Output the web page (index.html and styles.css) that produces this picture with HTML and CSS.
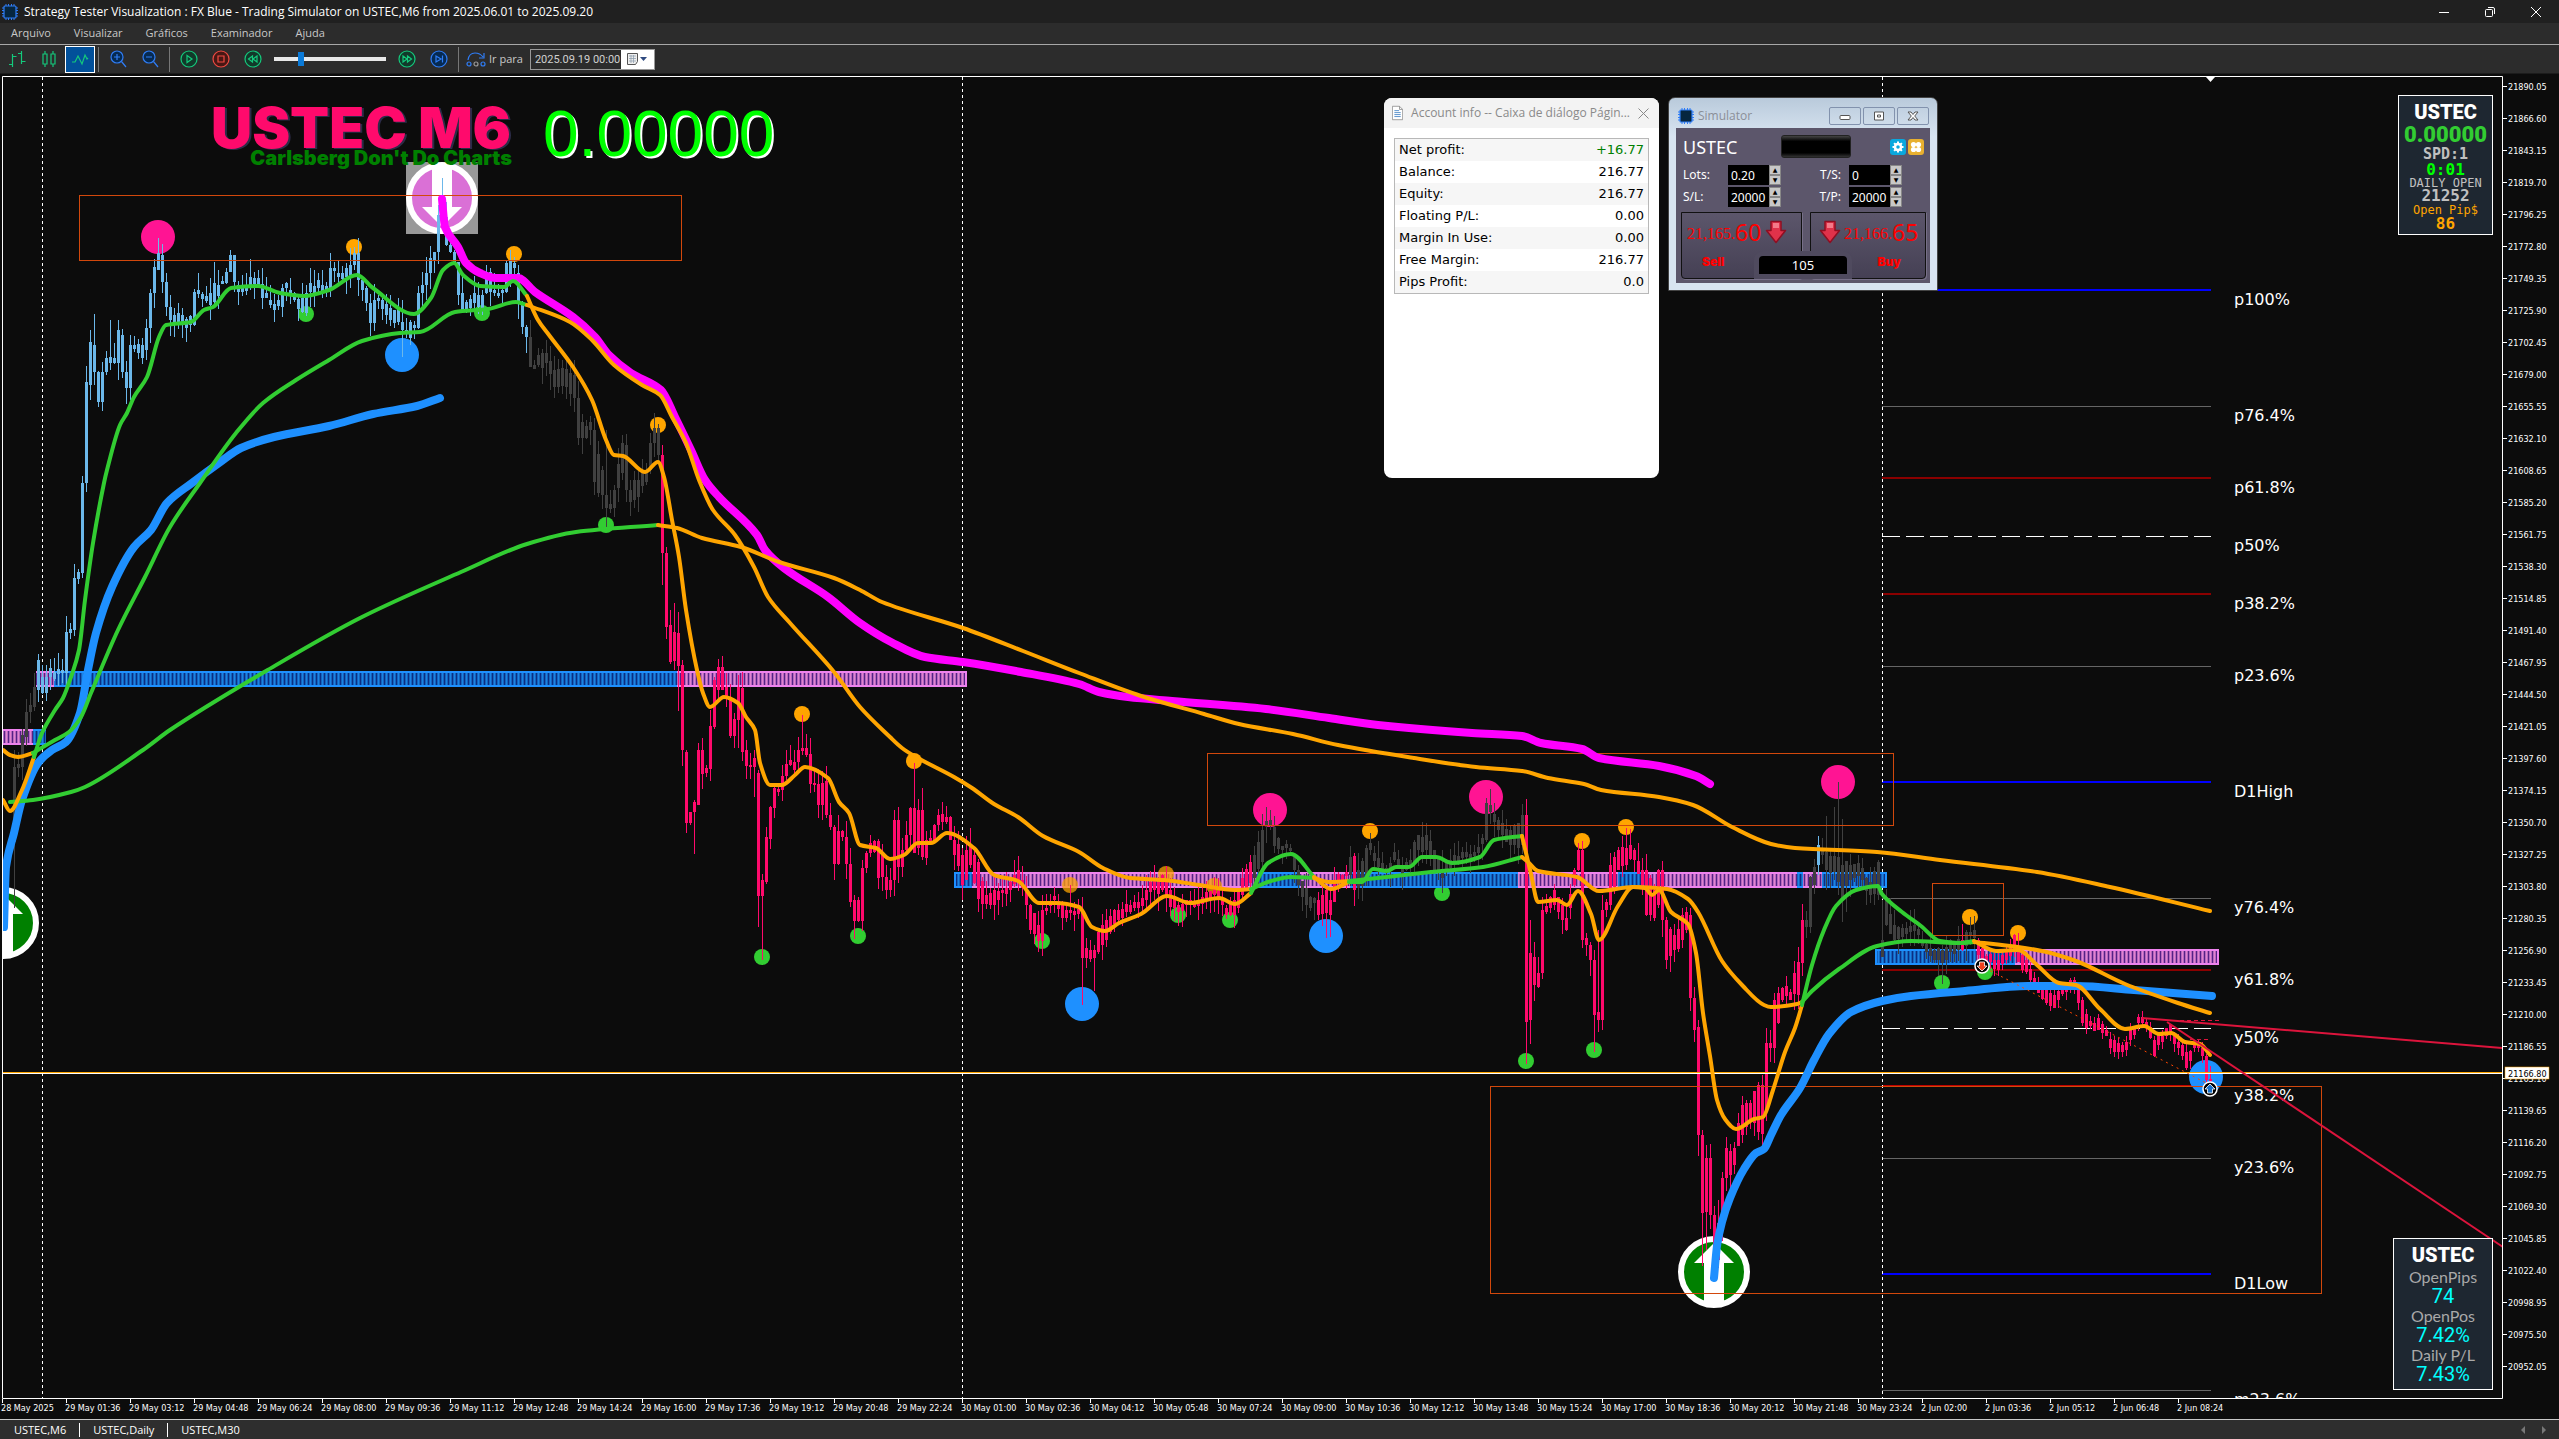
FILE: index.html
```html
<!DOCTYPE html>
<html lang="pt">
<head>
<meta charset="utf-8">
<title>Strategy Tester Visualization</title>
<link rel="stylesheet" href="styles.css">
</head>
<body>
<svg class="defs" aria-hidden="true">
  <symbol id="chip" viewBox="0 0 16 16"><path d="M4 0v16M6.500 0v16M9.500 0v16M12 0v16M0 4h16M0 6.500h16M0 9.500h16M0 12h16" stroke="#2f7df6" stroke-width="1"/><rect x="2" y="2" width="12" height="12" rx="1" fill="#06263f" stroke="#2f7df6" stroke-width="1.200"/></symbol>
  <symbol id="drop" viewBox="0 0 22 24"><path d="M6 1.500h10v9h4.500L11 22.500 1.500 10.500H6z" fill="#e0324a" stroke="#8e0f22" stroke-width="1.500" stroke-linejoin="round"/><path d="M8 3h6v5H8z" fill="#f47a88"/></symbol>
</svg>
<header class="titlebar">
  <svg class="i16"><use href="#chip"/></svg>
  <span class="title">Strategy Tester Visualization : FX Blue - Trading Simulator on USTEC,M6 from 2025.06.01 to 2025.09.20</span>
  <div class="winctl">
    <button aria-label="Minimize"><svg viewBox="0 0 12 12"><path d="M1 6.500h10"/></svg></button>
    <button aria-label="Restore"><svg viewBox="0 0 12 12"><rect x="1.500" y="3.500" width="7" height="7" rx="1"/><path d="M4 1.500h5q1.500 0 1.500 1.500v5"/></svg></button>
    <button aria-label="Close"><svg viewBox="0 0 12 12"><path d="M1 1l10 10M11 1L1 11"/></svg></button>
  </div>
</header>
<nav class="menubar">
  <a href="#">Arquivo</a><a href="#">Visualizar</a><a href="#">Gráficos</a><a href="#">Examinador</a><a href="#">Ajuda</a>
</nav>
<div class="toolbar">
  <button class="tb" aria-label="Bars"><svg class="i18 g" viewBox="0 0 18 18"><path d="M4.500 4v13M4.500 6.500h4M1 14.500h3.500M13.500 1v13M13.500 11.500h4M10 3.500h3.500"/></svg></button>
  <button class="tb" aria-label="Candles"><svg class="i18 g" viewBox="0 0 18 18"><path d="M5 1v3M5 14v3M13 1v3M13 14v3M3 4h4v10H3zM11 4h4v10h-4z"/></svg></button>
  <button class="tb on" aria-label="Line"><svg class="i18 g" viewBox="0 0 18 18"><path d="M1 12h3l3-6 4 8 3-9 2 4 1-1"/></svg></button>
  <i class="sep"></i>
  <button class="tb" aria-label="Zoom in"><svg class="i18 b" viewBox="0 0 18 18"><circle cx="8" cy="7" r="6" fill="#062a52"/><path d="M12.500 11.500L17 17M5 7h6M8 4v6"/></svg></button>
  <button class="tb" aria-label="Zoom out"><svg class="i18 b" viewBox="0 0 18 18"><circle cx="8" cy="7" r="6" fill="#062a52"/><path d="M12.500 11.500L17 17M5 7h6"/></svg></button>
  <i class="sep"></i>
  <button class="tb" aria-label="Play"><svg class="i18 g" viewBox="0 0 18 18"><circle cx="9" cy="9" r="8" fill="#12392a"/><path d="M7 5.500l5 3.500-5 3.500z"/></svg></button>
  <button class="tb" aria-label="Stop"><svg class="i18 r" viewBox="0 0 18 18"><circle cx="9" cy="9" r="8" fill="#471714"/><path d="M6 6h6v6H6z"/></svg></button>
  <button class="tb" aria-label="Slower"><svg class="i18 g" viewBox="0 0 18 18"><circle cx="9" cy="9" r="8" fill="#12392a"/><path d="M8.500 6v6L4.500 9zM13 6v6L9 9z"/></svg></button>
  <input class="speed" type="range" min="0" max="100" value="23" aria-label="Speed">
  <button class="tb" aria-label="Faster"><svg class="i18 g" viewBox="0 0 18 18"><circle cx="9" cy="9" r="8" fill="#12392a"/><path d="M5 6v6l4-3zM9.500 6v6l4-3z"/></svg></button>
  <button class="tb" aria-label="To end"><svg class="i18 b" viewBox="0 0 18 18"><circle cx="9" cy="9" r="8" fill="#062a52"/><path d="M6 6v6l5-3zM12.500 5.500v7"/></svg></button>
  <i class="sep"></i>
  <label class="goto" for="date"><svg class="i20 b" viewBox="0 0 20 18"><path d="M2 10Q3 3 9 3q5 0 8 4M18 3v5h-5"/><circle cx="3" cy="14" r="2"/><circle cx="10" cy="14" r="2" stroke="#999"/><circle cx="17" cy="14" r="2"/></svg>Ir para</label>
  <div class="date"><input id="date" type="text" value="2025.09.19 00:00"><button aria-label="Calendar"><svg width="22" height="14" viewBox="0 0 22 14"><path d="M1.500 1.500h10v8l-2 3h-8z" fill="#eee" stroke="#555"/><path d="M3 4h7M3 6.500h7M3 9h7M5 3v8M7.500 3v8" stroke="#8899aa" stroke-width=".7"/><path d="M14 5h7l-3.500 4z" fill="#2f4a80"/></svg></button></div>
</div>
<main class="workspace">
  <svg id="chart" class="chart" viewBox="0 74 2559 1345" preserveAspectRatio="xMinYMin meet">
    <defs>
      <pattern id="pb" width="4" height="14" patternUnits="userSpaceOnUse"><rect width="4" height="14" fill="#1565bb"/><rect width="1" height="14" fill="#0a2d86"/><rect x="2" width="1" height="14" fill="#1c83e6"/></pattern>
      <pattern id="pv" width="4" height="14" patternUnits="userSpaceOnUse"><rect width="4" height="14" fill="#b467bd"/><rect width="1" height="14" fill="#552186"/><rect x="2" width="1" height="14" fill="#e283d0"/></pattern>
      <clipPath id="area"><rect x="3" y="77" width="2499" height="1321"/></clipPath>
    </defs>
    <g id="plot" clip-path="url(#area)"></g>
    <path class="frame" d="M2.500 1398.500V76.500H2502.500V1398.500H2.500"/>
    <path d="M2206 77h9l-4.500 5z" fill="#fff"/>
    <g id="axes"></g>
  </svg>

  <section class="account">
    <header><svg width="14" height="18" viewBox="0 0 14 18"><path d="M.5.5h9l4 4v13H.5z" fill="#fff" stroke="#888"/><path d="M9.500.5v4h4" fill="none" stroke="#888"/><path d="M3 6h6M3 8.500h8M3 11h8M3 13.500h8" stroke="#3478c0"/></svg><span>Account info -- Caixa de diálogo Págin...</span><button aria-label="Close"><svg width="11" height="11" viewBox="0 0 11 11"><path d="M.5.5l10 10M10.500.5l-10 10" stroke="#888"/></svg></button></header>
    <table>
      <tr><th>Net profit:</th><td class="pos">+16.77</td></tr>
      <tr><th>Balance:</th><td>216.77</td></tr>
      <tr><th>Equity:</th><td>216.77</td></tr>
      <tr><th>Floating P/L:</th><td>0.00</td></tr>
      <tr><th>Margin In Use:</th><td>0.00</td></tr>
      <tr><th>Free Margin:</th><td>216.77</td></tr>
      <tr><th>Pips Profit:</th><td>0.0</td></tr>
    </table>
  </section>

  <section class="sim">
    <header><svg class="i16"><use href="#chip"/></svg><span>Simulator</span>
      <button aria-label="Minimize"><svg viewBox="0 0 14 12"><rect x="2" y="5.500" width="10" height="4" rx="1"/></svg></button>
      <button aria-label="Maximize"><svg viewBox="0 0 14 12"><path d="M2.500 2h9v8h-9zM5.500 5h3v2h-3z"/></svg></button>
      <button aria-label="Close"><svg viewBox="0 0 14 12"><path d="M2 2h3l2 2.500L9 2h3L8.700 6 12 10H9L7 7.500 5 10H2L5.300 6z"/></svg></button>
    </header>
    <div class="simbody">
      <div class="simtop"><b>USTEC</b><i class="lcd"></i>
        <button class="gear" aria-label="Settings"><svg viewBox="0 0 16 16"><circle cx="8" cy="8" r="3" fill="none" stroke="#fff" stroke-width="2.500"/><path d="M8 2.500v2M8 11.500v2M2.500 8h2M11.500 8h2M4.100 4.100l1.400 1.400M10.500 10.500l1.400 1.400M4.100 11.900l1.400-1.400M10.500 5.500l1.400-1.400" stroke="#fff" stroke-width="2"/></svg></button>
        <button class="apps" aria-label="Tools"><svg viewBox="0 0 16 16"><g fill="#fff"><circle cx="5.500" cy="5.500" r="2.600"/><circle cx="10.500" cy="5.500" r="2.600"/><circle cx="5.500" cy="10.500" r="2.600"/><circle cx="10.500" cy="10.500" r="2.600"/></g></svg></button></div>
      <div class="fields">
        <label for="lots">Lots:</label><div class="num"><input id="lots" value="0.20"><span><button aria-label="Up">▲</button><button aria-label="Down">▼</button></span></div>
        <label class="r" for="ts">T/S:</label><div class="num"><input id="ts" value="0"><span><button aria-label="Up">▲</button><button aria-label="Down">▼</button></span></div>
        <label for="sl">S/L:</label><div class="num"><input id="sl" value="20000"><span><button aria-label="Up">▲</button><button aria-label="Down">▼</button></span></div>
        <label class="r" for="tp">T/P:</label><div class="num"><input id="tp" value="20000"><span><button aria-label="Up">▲</button><button aria-label="Down">▼</button></span></div>
      </div>
      <div class="deal">
        <button><span class="px"><small>21,165.</small>60<svg width="22" height="24"><use href="#drop"/></svg></span><strong>Sell</strong></button>
        <button class="buy"><span class="px"><svg width="22" height="24"><use href="#drop"/></svg><small>21,166.</small>65</span><strong>Buy</strong></button>
        <output>105</output>
      </div>
    </div>
  </section>

  <aside class="card quote">
    <h2>USTEC</h2><p class="q1">0.00000</p><p class="q2">SPD:1</p><p class="q3">0:01</p><p class="q4">DAILY OPEN</p><p class="q5">21252</p><p class="q6">Open Pip$</p><p class="q7">86</p>
  </aside>
  <aside class="card perf">
    <h2>USTEC</h2><p>OpenPips</p><p class="v">74</p><p>OpenPos</p><p class="v">7.42%</p><p>Daily P/L</p><p class="v">7.43%</p>
  </aside>
</main>
<footer class="tabs"><a href="#">USTEC,M6</a><a href="#">USTEC,Daily</a><a href="#">USTEC,M30</a><span class="arrows"><svg width="30" height="8" viewBox="0 0 30 8"><path d="M6 0v8L2 4zM23 0v8l4-4z" fill="#777"/></svg></span></footer>
<script src="chart.js"></script>
</body>
</html>
```

FILE: styles.css
```css
* { box-sizing: border-box; }
body { margin: 0; min-height: 100vh; display: flex; flex-direction: column; background: #0c0c0c; color: #ddd; font: 12px/16px "Open Sans", "Noto Sans", sans-serif; }
button { margin: 0; padding: 0; border: 0; background: none; color: inherit; font: inherit; }
a { color: inherit; text-decoration: none; }
svg { display: block; }
.defs { position: absolute; width: 0; height: 0; }
.i16 { width: 16px; height: 16px; }
.i18 { width: 18px; height: 18px; fill: none; stroke-width: 1.200; }
.i20 { width: 20px; height: 18px; fill: none; stroke-width: 1.200; }
.g { stroke: #14c97c; } .b { stroke: #2f7df6; } .r { stroke: #f04a42; }

.titlebar { display: flex; align-items: center; gap: 6px; height: 23px; padding-left: 2px; background: #202020; color: #fff; }
.title { flex: 1; }
.winctl { display: flex; }
.winctl button { width: 46px; display: grid; place-items: center; }
.winctl svg { width: 12px; height: 12px; fill: none; stroke: #fff; }
.menubar { display: flex; gap: 23px; align-items: center; height: 22px; padding: 0 0 2px 11px; background: #2c2c2c; border-bottom: 1px solid #a8a8a8; color: #c8c8c8; font-size: 11px; }
.toolbar { display: flex; align-items: center; height: 29px; background: #2c2c2c; border-bottom: 1px solid #1c1c1c; padding-left: 1px; }
.tb { width: 32px; height: 27px; display: grid; place-items: center; }
.tb.on { width: 30px; background: #02509a; border: 1px solid #fff; }
.sep { width: 1px; height: 25px; margin: 0 3px; background: #777; }
.speed { appearance: none; width: 112px; height: 20px; margin: 0 5px; background: none; }
.speed::-webkit-slider-runnable-track { height: 4px; background: #e8e8e8; }
.speed::-webkit-slider-thumb { appearance: none; width: 6px; height: 14px; margin-top: -5px; background: #0a7ad8; }
.goto { display: flex; align-items: center; gap: 3px; margin: 0 7px 0 4px; color: #c8c8c8; font-size: 11px; }
.date { display: flex; height: 21px; border: 1px solid #999; font: 11px Roboto, sans-serif; }
.date input { width: 90px; padding: 0 0 0 4px; border: 0; background: #2c2c2c; color: #d0d0d0; font: inherit; }
.date button { width: 33px; display: grid; place-items: center; background: #fff; }

.workspace { position: relative; flex: 1; overflow: hidden; }
.chart { width: 100%; height: auto; }
.frame { fill: none; stroke: #fff; }
.axis { fill: #fff; font: 9px "DejaVu Sans Condensed", "DejaVu Sans", sans-serif; }
.lvl { fill: #fff; font: 16px "DejaVu Sans", sans-serif; }
.big { font: 900 57px Inter, sans-serif; fill: #ff0a6c; filter: drop-shadow(2px 1px 0 #2c2c48); }
.sub { font: 900 20px Inter, sans-serif; fill: #008000; }
.pip { font: 64px "Liberation Sans", sans-serif; fill: #0f0; filter: drop-shadow(2px 2px 0 #fff); }

.account { position: absolute; left: 1384px; top: 24px; width: 275px; height: 380px; border-radius: 8px; background: #fff; color: #000; overflow: hidden; }
.account header { display: flex; align-items: center; gap: 8px; height: 30px; padding: 0 10px 0 8px; background: #f3f3f3; color: #8a8a8a; }
.account header span { flex: 1; white-space: nowrap; }
.account table { width: 255px; margin: 10px; border: 1px solid #b8b8b8; border-collapse: collapse; font: 13px/22px "DejaVu Sans", sans-serif; }
.account th { font-weight: 400; text-align: left; padding: 0 4px; }
.account td { text-align: right; padding: 0 4px; }
.account tr:nth-child(odd) { background: #f6f6f6; }
.account .pos { color: #008000; }

.sim { position: absolute; left: 1668px; top: 23px; width: 270px; height: 194px; padding: 0 7px 7px; border: 1px solid #444; border-radius: 7px 7px 0 0; background: linear-gradient(#b9cadb, #d8e4f1 20%); }
.sim header { display: flex; align-items: center; gap: 2px; height: 30px; padding: 6px 1px 0 2px; color: #8b8f98; }
.sim header span { flex: 1; padding-left: 2px; }
.sim header button { width: 32px; height: 18px; display: grid; place-items: center; border: 1px solid #8292ad; border-radius: 2px; }
.sim header button svg { width: 14px; height: 12px; fill: #fff; stroke: #555; }
.simbody { height: 155px; background: #5c566b; color: #fff; padding: 7px 6px 0 7px; }
.simtop { display: flex; align-items: center; height: 23px; gap: 2px; }
.simtop b { width: 96px; font: 18px/22px "Noto Sans", sans-serif; }
.lcd { width: 70px; height: 23px; margin-right: auto; border: 1px solid #222; border-radius: 3px; background: linear-gradient(#444, #000 25%, #000 80%, #333); }
.simtop button { width: 16px; height: 16px; border-radius: 3px; }
.gear { background: #0aa8dd; } .apps { background: #e8b030; }
.fields { display: grid; grid-template-columns: 45px 53px 1fr 53px; row-gap: 2px; margin: 7px 22px 0 0; font: 12px/20px "Noto Sans", sans-serif; }
.fields .r { text-align: right; padding-right: 8px; }
.num { display: flex; height: 20px; background: #000; }
.num input { width: 41px; padding: 0 0 0 3px; border: 0; background: #000; color: #fff; font: 12px "Noto Sans", sans-serif; }
.num span { display: grid; width: 12px; }
.num button { height: 10px; background: #c8c8c8; border: 1px solid #888; color: #000; font: 6px/8px "DejaVu Sans", sans-serif; }
.deal { position: relative; display: flex; gap: 8px; margin: 5px -2px 0; }
.deal > button { flex: 1; height: 67px; border: 1px solid #111; border-radius: 0 0 4px 4px; box-shadow: 1px 1px 0 #777088; background: linear-gradient(#5c566b, #454054); color: #f00; text-align: left; padding: 4px 5px; }
.px { display: flex; align-items: center; height: 30px; font: 23px/30px "Noto Sans", sans-serif; }
.px small { font: 16px/30px "Liberation Serif", serif; padding-top: 4px; }
.px svg { margin-left: 4px; }
.buy .px svg { margin: 0 3px 0 3px; }
.deal strong { display: block; margin: 8px 15px; font: 900 12px/14px Inter, sans-serif; }
.deal .buy { padding-right: 0; }
.deal .buy strong { text-align: right; margin-right: 24px; }
.deal output { position: absolute; left: 73px; bottom: 0; width: 98px; height: 28px; border: 5px solid #4f4a5e; border-radius: 9px 9px 0 0; background: #000; text-align: center; font: 13px/18px "Noto Sans", sans-serif; }

.card { position: absolute; border: 1px solid #fff; background: #1e2731; text-align: center; white-space: nowrap; }
.card h2 { margin: 0; font: 900 20px/24px Roboto, sans-serif; color: #fff; }
.card p { margin: 0; }
.quote { right: 66px; top: 21px; width: 95px; height: 140px; padding-top: 4px; font-family: "DejaVu Sans Mono", monospace; color: #c0c0c0; }
.q1 { font: 900 22px/22px Roboto, sans-serif; color: #32cd32; }
.q2 { font-size: 15px; line-height: 16px; font-weight: 700; }
.q3 { font-size: 16px; line-height: 16px; font-weight: 700; color: #0f0; }
.q4 { font-size: 12px; line-height: 10px; }
.q5 { font-size: 16px; line-height: 16px; font-weight: 700; }
.q6 { font-size: 12px; line-height: 12px; color: #ffa500; }
.q7 { font-size: 16px; line-height: 16px; font-weight: 700; color: #ffa500; }
.perf { right: 66px; bottom: 29px; width: 100px; height: 152px; padding-top: 4px; color: #a9a9a9; font: 16px/20px Lato, sans-serif; }
.perf .v { color: #0ff; font: 20px/19px Roboto, sans-serif; }

.tabs { display: flex; align-items: center; height: 20px; border-top: 1px solid #c8c8c8; background: #2e2e2e; color: #fff; padding-left: 1px; font-size: 11px; line-height: 14px; }
.tabs a { padding: 0 13px; }
.tabs a + a { border-left: 1px solid #fff; }
.arrows { margin-left: auto; padding-right: 10px; }
```

FILE: chart.js
```js
const plot = document.getElementById('plot');
const axes = document.getElementById('axes');
const out = [];

const LIME = '#32cd32', ORANGE = '#ffa500', BLUE = '#1e90ff', VIOLET = '#ee82ee', MAG = '#ff00ff';
const DOWN = '#ff0a6c', FLAT = '#404040', UP = '#6cb8ea', BOX = '#d2480c';

// Smooth curve through the points, with control arms kept inside each step
function poly(pts, color, width) {
  const p = pts.split(' ').map(s => s.split(',').map(Number));
  const slope = p.map((q, i) => {
    const a = p[Math.max(0, i - 1)], b = p[Math.min(p.length - 1, i + 1)];
    const left = (q[1] - a[1]) / (q[0] - a[0] || 1), right = (b[1] - q[1]) / (b[0] - q[0] || 1);
    if (i === 0) return right;
    if (i === p.length - 1) return left;
    return left * right <= 0 ? 0 : 2 * left * right / (left + right);
  });
  let d = `M${p[0]}`;
  for (let i = 1; i < p.length; i++) {
    const a = p[i - 1], b = p[i], h = (b[0] - a[0]) / 3;
    d += `C${a[0] + h} ${a[1] + slope[i - 1] * h} ${b[0] - h} ${b[1] - slope[i] * h} ${b[0]} ${b[1]}`;
  }
  return `<path d="${d}" fill="none" stroke="${color}" stroke-width="${width}" stroke-linejoin="round" stroke-linecap="round"/>`;
}
const line = (x1, y1, x2, y2, color, width = 1, dash = '') =>
  `<line x1="${x1}" y1="${y1}" x2="${x2}" y2="${y2}" stroke="${color}" stroke-width="${width}" stroke-dasharray="${dash}"/>`;

// Big reversal signals
function signal(x, y, fill, up) {
  const d = up ? 1 : -1;
  return `<circle cx="${x}" cy="${y}" r="33" fill="${fill}" stroke="#fff" stroke-width="6"/>` +
    `<path d="M${x} ${y - d * 29}l20 ${d * 20}h-10v${d * 42}h-20v${-d * 42}h-10z" fill="#fff"/>`;
}
out.push('<rect x="406" y="162" width="72" height="72" fill="#999"/>', signal(442, 198, '#da70d6', false), signal(1714, 1272, '#008000', true), signal(3, 923, '#008000', true));

// Pivot levels
[[290, '#00f', 2, 'p100%'], [406.5, '#666', 1, 'p76.4%'], [478, '#8b0000', 2, 'p61.8%'], [536.5, '#fff', 1, 'p50%', '18 6'],
 [594, '#8b0000', 2, 'p38.2%'], [666.5, '#666', 1, 'p23.6%'], [782, '#00f', 2, 'D1High'], [898.5, '#666', 1, 'y76.4%'],
 [970, '#8b0000', 2, 'y61.8%'], [1028.5, '#fff', 1, 'y50%', '18 6'], [1086, '#c00000', 2, 'y38.2%'], [1158.5, '#666', 1, 'y23.6%'],
 [1274, '#00f', 2, 'D1Low'], [1390.5, '#666', 1, 'm23.6%']]
  .forEach(([y, c, w, t, d]) => out.push(line(1882, y, 2211, y, c, w, d || ''), `<text class="lvl" x="2234" y="${Math.floor(y) + 15}">${t}</text>`));

// Day separators
[42.5, 962.5, 1882.5].forEach(x => out.push(line(x, 77, x, 1398, '#fff', 1, '3 3')));

// Swing markers
const dots = (list, r, c) => list.split(' ').forEach(p => {
  const [x, y] = p.split(',');
  out.push(`<circle cx="${x}" cy="${y}" r="${r}" fill="${c}"/>`);
});
dots('158,237 1270,810 1486,797 1838,782', 17, '#ff1493');
dots('402,355 1082,1004 1326,936 2206,1077', 17, BLUE);
dots('354,247 514,254 658,425 802,714 914,761 1370,831 1582,841 1626,827 1970,917 2018,933', 8, ORANGE);
dots('306,314 482,313 606,525 762,957 858,936 1042,941 1178,915 1230,920 1442,893 1526,1061 1594,1050 1942,983 1985,972', 8, LIME);

// Daily open bands: start, end, hue
const band = (y, parts) => parts.forEach(([a, b, hue]) => {
  const v = hue === 'v';
  out.push(`<rect x="${a}" y="${y}" width="${b - a}" height="14" fill="url(#p${hue})"/>`,
    line(a, y, b, y, v ? VIOLET : BLUE, 2), line(a, y + 14, b, y + 14, v ? VIOLET : BLUE, 2));
});
band(730, [[3, 33, 'v'], [33, 46, 'b']]);
band(672, [[36, 54, 'v'], [54, 677, 'b'], [677, 966, 'v']]);
band(873, [[955, 972, 'b'], [972, 1257, 'v'], [1257, 1300, 'b'], [1300, 1350, 'v'], [1350, 1518, 'b'], [1518, 1618, 'v'], [1618, 1643, 'b'], [1643, 1797, 'v'], [1797, 1803, 'b'], [1803, 1822, 'v'], [1822, 1886, 'b']]);
band(950, [[1876, 1976, 'b'], [1976, 1988, 'v'], [1988, 2015, 'b'], [2015, 2218, 'v']]);
[[955, 873, BLUE], [966, 672, VIOLET], [1886, 873, BLUE], [1876, 950, BLUE], [2218, 950, VIOLET]].forEach(([x, y, c]) => out.push(line(x, y - 1, x, y + 15, c, 2)));
dots('1070,885 1166,874 1214,886', 8, '#ffa500bb');

// Candle bodies: x,top,bottom
const bodies = `6,850,867 10,845,850 14,767,842 18,764,768 22,735,767 26,712,737 30,705,712 34,687,707 38,660,690 42,677,693 46,677,693 50,668,677 62,670,673 66,632,673 70,629,633 74,578,630 78,572,579 82,483,573 86,382,483 90,342,385 94,345,372 98,372,402 102,372,402 106,358,372 110,357,363 114,358,363 118,330,363 122,335,372 126,372,388 130,345,388 134,345,349 142,345,358 146,328,350 150,293,328 154,267,293 158,253,270 162,255,282 166,282,307 170,307,320 174,315,325 190,316,325 194,292,325 198,290,294 206,296,301 214,283,302 222,281,284 226,272,283 230,255,272 234,255,282 238,285,292 246,288,291 250,277,287 254,278,284 262,284,298 266,293,298 270,300,305 278,300,306 282,288,307 286,283,288 294,293,300 302,298,312 306,293,313 310,283,292 318,280,288 326,286,290 330,268,288 334,268,271 338,273,277 346,268,277 350,265,277 354,253,265 358,253,280 362,280,290 366,288,303 370,303,323 374,300,323 378,298,301 382,300,309 390,308,320 398,307,322 402,322,330 406,330,333 410,322,338 414,325,328 418,293,328 422,285,293 426,273,285 430,258,273 434,252,260 438,215,252 442,215,219 446,217,245 450,245,252 454,252,263 458,262,295 462,293,310 466,302,310 474,293,303 482,295,308 486,272,293 490,272,292 494,290,293 502,290,293 506,263,292 514,263,268 518,273,302 522,302,327 526,327,337 530,337,367 534,365,369 542,353,368 546,353,363 554,370,387 558,369,387 566,369,387 574,375,398 578,398,438 582,422,438 590,422,430 594,430,482 602,470,495 606,495,508 610,504,509 614,490,508 622,443,473 626,445,490 630,490,502 634,480,500 646,470,482 650,443,470 654,428,443 658,428,455 662,455,553 666,553,627 670,625,662 674,632,661 678,633,666 682,665,750 686,752,823 690,812,823 694,802,812 698,750,805 702,750,774 706,768,773 710,726,769 714,680,727 718,667,690 722,667,690 726,687,697 730,697,736 734,719,736 738,687,720 742,688,752 746,750,766 750,765,767 754,758,767 758,773,896 762,880,896 766,837,882 770,807,839 774,788,808 778,789,792 782,776,790 786,764,776 790,760,765 794,762,770 798,750,762 802,748,751 806,748,755 810,754,784 814,783,785 818,784,805 822,783,805 826,781,815 830,815,827 834,827,864 838,831,864 842,831,837 846,837,864 850,864,902 854,900,921 858,900,921 862,868,921 866,853,868 870,843,853 874,841,852 878,841,878 882,852,877 886,877,890 890,880,890 894,820,880 898,820,867 902,850,867 906,835,850 910,808,835 914,808,853 918,810,848 922,810,857 926,840,858 930,838,843 934,825,840 938,815,825 946,817,822 950,817,840 954,840,855 962,855,885 966,850,880 970,845,865 978,862,899 986,895,904 994,890,905 1002,890,893 1010,882,890 1018,870,880 1022,880,888 1026,890,905 1030,905,930 1038,925,941 1042,910,941 1046,908,911 1054,896,900 1062,905,918 1070,910,913 1078,909,914 1082,910,958 1086,948,958 1094,950,958 1098,932,952 1106,920,940 1118,910,920 1130,905,912 1138,902,908 1146,890,900 1154,880,890 1162,875,890 1170,890,907 1178,905,912 1190,900,905 1202,897,904 1214,888,895 1222,898,905 1226,908,915 1234,900,915 1242,878,895 1254,855,878 1262,830,862 1266,821,826 1270,820,826 1274,827,846 1282,846,850 1290,848,851 1294,855,870 1298,870,885 1306,888,905 1314,898,903 1318,900,915 1326,890,913 1330,900,915 1334,880,902 1338,874,882 1346,872,876 1350,857,875 1354,856,890 1358,870,888 1366,848,880 1370,843,850 1378,858,867 1386,868,873 1394,852,860 1402,866,876 1410,860,866 1414,842,862 1418,835,850 1426,835,850 1434,850,870 1442,872,878 1450,860,868 1462,852,858 1470,854,858 1482,838,844 1486,803,840 1490,805,812 1498,820,830 1510,830,845 1522,815,845 1526,815,1022 1530,953,1020 1534,957,985 1538,973,987 1542,910,973 1546,906,912 1554,890,905 1562,905,920 1566,918,930 1574,870,885 1578,850,870 1582,850,940 1586,938,945 1590,945,960 1594,960,1015 1598,1012,1020 1602,910,1020 1606,902,910 1610,865,905 1618,850,870 1626,848,865 1634,850,860 1642,870,885 1646,870,915 1654,890,918 1658,870,905 1662,870,920 1666,920,960 1674,935,950 1682,915,940 1686,912,930 1690,915,998 1694,998,1030 1698,1027,1135 1702,1135,1213 1706,1158,1212 1710,1158,1215 1714,1215,1260 1718,1223,1260 1722,1178,1225 1726,1148,1178 1734,1148,1165 1742,1105,1135 1750,1103,1120 1758,1085,1132 1762,1085,1134 1766,1043,1110 1770,1043,1048 1774,1000,1048 1782,988,1000 1790,992,1000 1798,962,995 1802,920,963 1806,920,927 1810,877,927 1814,867,885 1818,845,865 1822,849,855 1826,852,870 1834,856,872 1842,865,900 1850,865,880 1862,868,880 1870,882,895 1878,862,895 1882,940,957 1886,900,925 1894,925,940 1906,928,934 1914,925,931 1922,940,946 1934,950,960 1942,950,963 1950,940,952 1962,940,950 1966,932,946 1970,932,936 1974,930,938 1978,940,955 1986,956,963 1998,960,970 2006,952,960 2014,935,950 2022,955,970 2034,978,986 2046,990,1003 2054,995,1008 2062,988,994 2074,980,986 2082,1000,1023 2090,1021,1026 2098,1018,1030 2106,1030,1036 2114,1040,1052 2122,1045,1052 2130,1030,1040 2138,1017,1023 2146,1022,1028 2154,1040,1056 2162,1036,1042 2170,1024,1034 2178,1042,1048 2186,1052,1068 2194,1044,1048 2202,1048,1056 2206,1056,1080 2210,1079,1080`
  .split(/\s+/).map(s => s.split(',').map(Number));
const hues = [[12, DOWN], [36, FLAT], [528, UP], [660, FLAT], [1252, DOWN], [1316, FLAT], [1348, DOWN], [1352, FLAT], [1356, DOWN], [1524, FLAT], [1804, DOWN], [1816, FLAT], [1820, UP], [1960, FLAT], [1964, DOWN], [1976, FLAT], [9999, DOWN]];
// Long wicks: x -> [high, low]
const wicks = { 14: [750, 908], 50: [659, 690], 94: [314, 385], 110: [320, 370], 118: [320, 380], 130: [335, 400], 158: [238, 260], 214: [262, 305], 230: [250, 272], 250: [259, 290], 306: [285, 316], 354: [247, 270], 402: [300, 357], 410: [320, 345], 442: [178, 225], 482: [290, 315], 514: [257, 275], 526: [325, 353], 530: [320, 367], 606: [430, 528], 610: [490, 513], 614: [485, 517], 622: [435, 480], 630: [480, 516], 658: [424, 460], 662: [445, 585], 674: [603, 670], 678: [612, 711], 686: [750, 833], 694: [800, 854], 718: [659, 700], 738: [675, 748], 754: [750, 797], 758: [770, 927], 762: [874, 960], 802: [715, 755], 854: [895, 939], 914: [763, 853], 922: [788, 860], 942: [802, 830], 1070: [885, 920], 1082: [897, 1005], 1094: [945, 991], 1270: [810, 830], 1326: [885, 938], 1330: [890, 937], 1370: [833, 855], 1442: [850, 893], 1486: [798, 842], 1526: [799, 1064], 1530: [920, 1044], 1582: [841, 948], 1594: [950, 1052], 1598: [930, 1032], 1626: [828, 870], 1638: [843, 870], 1698: [1020, 1156], 1702: [1130, 1266], 1706: [1145, 1250], 1718: [1200, 1268], 1758: [1082, 1140], 1826: [816, 890], 1834: [807, 880], 1838: [782, 895], 1842: [819, 922], 1846: [870, 912], 1882: [900, 957], 1942: [945, 984], 1970: [917, 945], 2018: [933, 955], 2206: [1054, 1090], 2210: [1066, 1086] };
let seed = 7;
const rnd = () => (seed = (seed * 16807) % 2147483647) / 2147483647;
for (let x = 6, i = 0; x <= 2210; x += 4) {
  while (i < bodies.length - 2 && bodies[i + 1][0] <= x) i++;
  const a = bodies[i], b = bodies[i + 1];
  const t = (x - a[0]) / (b[0] - a[0]);
  const exact = x === a[0] || x === b[0];
  const wob = exact ? 0 : Math.round((rnd() - 0.5) * 8);
  const top = Math.round(a[1] + (b[1] - a[1]) * t) + wob;
  const low = Math.max(top + 2, Math.round(a[2] + (b[2] - a[2]) * t) + wob);
  const c = hues.find(h => x < h[0])[1];
  const reach = x > 1980 ? 8 : 17;
  const w = wicks[x] || [top - Math.round(rnd() * reach), low + Math.round(rnd() * reach)];
  out.push(`<path d="M${x + 0.5} ${w[0]}V${w[1]}" stroke="${c}"/><rect x="${x - 1}" y="${top}" width="3" height="${low - top}" fill="${c}"/>`);
}

// Supply and demand boxes
[[79, 195, 681, 260], [1207, 753, 1893, 825], [1490, 1086, 2321, 1293], [1932, 883, 2003, 935]].forEach(([a, b, c, d]) =>
  out.push(`<rect x="${a}.5" y="${b}.5" width="${c - a}" height="${d - b}" fill="none" stroke="${BOX}"/>`));

// Current price
out.push(line(3, 1072.5, 2502, 1072.5, ORANGE), line(3, 1073.5, 2502, 1073.5, '#fff'));

// Anchored averages
out.push(poly('4,927 6,867 14,833 22,800 38,763 52,750 66,742 80,713 88,670 96,633 112,587 134,547 151,530 167,503 192,483 219,463 241,448 274,437 329,426 373,414 417,406 440,398', BLUE, 8));
out.push(poly('1714,1278 1717,1246 1722,1222 1730,1198 1744,1169 1756,1153 1764,1149 1771,1135 1781,1115 1800,1088 1814,1060 1829,1034 1851,1012 1882,1001 1911,996 1965,991 2028,986 2076,986 2134,990 2212,996', BLUE, 8));
out.push(poly('442,199 445,227 458,247 466,263 480,273 496,278 518,278 535,292 573,317 595,337 609,355 631,373 661,390 675,417 691,450 705,480 719,497 757,535 765,550 784,568 828,597 860,623 891,642 925,657 963,662 1021,672 1079,684 1099,692 1128,697 1172,701 1266,709 1329,718 1378,725 1472,733 1522,736 1541,743 1582,749 1599,758 1659,766 1696,776 1710,784', MAG, 8));

// Moving averages, coloured by trend
const ma = parts => parts.forEach(([c, p]) => out.push(poly(p, c, 4)));
ma([
  [LIME, '10,802 33,800 71,792 85,787 143,750 170,730 266,671 362,617 461,572 527,544 576,532 658,525'],
  [ORANGE, '658,525 677,528 702,538 741,547 779,562 834,578 860,590 882,602 963,628 1023,651 1079,673 1141,696 1204,714 1239,724 1293,734 1338,745 1414,758 1476,767 1522,771 1548,778 1584,784 1601,790 1659,797 1693,805 1732,827 1771,844 1795,848 1877,852 1940,860 2037,872 2110,887 2210,911'],
  [ORANGE, '3,750 10,755 18,757 33,753'],
  [LIME, '33,753 55,740 69,732 81,717 91,693 118,630 145,577 170,527 200,483 236,433 263,403 296,380 329,360 362,341 400,333 420,332 455,312 488,309 516,302 527,305'],
  [ORANGE, '527,305 570,322 592,340 614,365 642,385 660,395 672,417 686,443 699,480 713,510 735,535 754,567 768,597 790,623 834,672 860,707 890,737 902,748 916,757 954,777 972,788 994,804 1018,817 1043,836 1079,852 1103,868 1130,878 1164,880 1199,885 1235,890 1251,889'],
  [LIME, '1251,889 1271,881 1291,877 1314,878'],
  [ORANGE, '1314,878 1329,882 1349,881'],
  [LIME, '1349,881 1387,877 1431,872 1483,867 1522,857'],
  [ORANGE, '1522,857 1528,862 1538,871 1577,877 1599,891 1633,887 1667,889 1688,899 1698,912 1722,961 1742,985 1764,1005 1771,1007 1797,1004 1802,1002'],
  [LIME, '1802,1002 1812,991 1839,969 1877,946 1911,941 1960,943 1974,942'],
  [ORANGE, '1974,942 2018,947 2042,951 2076,961 2125,984 2178,1003 2210,1013'],
  [ORANGE, '3,800 10,811 22,790 34,757'],
  [LIME, '34,757 42,733 55,710 63,698 71,677 79,650 85,600 93,543 104,483 107,470 120,425 127,413 134,397 147,377 159,337 166,325 191,322 204,310 213,307 231,288 258,286 280,293 304,296 329,290 357,275 373,288 414,314 431,298 443,270 454,263 463,275 480,286 504,287 513,281 527,296'],
  [ORANGE, '527,296 538,320 549,335 573,367 592,400 606,440 614,455 623,456 645,472 658,462 664,477 672,520 679,557 686,610 697,670 703,693 710,707 724,697 738,703 746,717 755,730 760,763 770,785 782,785 795,775 805,767 828,778 839,802 849,813 860,845 876,848 890,859 904,855 918,843 931,843 947,833 974,848 994,875 1018,881 1039,903 1056,903 1079,907 1092,927 1105,931 1119,923 1141,914 1167,896 1190,903 1219,898 1235,904 1251,893'],
  [LIME, '1251,893 1268,863 1291,854 1314,877'],
  [ORANGE, '1314,877 1331,889 1349,882'],
  [LIME, '1349,882 1362,882 1373,869 1387,871 1396,867 1409,867 1422,857 1436,857 1452,863 1480,857 1494,840 1522,836'],
  [ORANGE, '1522,836 1531,874 1538,902 1557,900 1567,905 1578,891 1591,914 1599,940 1618,906 1633,887 1645,888 1652,895 1659,890 1671,912 1688,924 1696,953 1703,1013 1710,1056 1717,1100 1725,1119 1736,1129 1754,1119 1763,1117 1773,1090 1785,1052 1795,1028 1802,1005'],
  [LIME, '1802,1005 1812,965 1824,930 1836,906 1856,890 1878,886 1882,894 1902,912 1921,926 1940,941 1960,943 1974,941'],
  [ORANGE, '1974,941 1996,951 2018,950 2037,965 2059,983 2076,985 2100,1009 2125,1029 2144,1026 2159,1034 2171,1033 2185,1042 2200,1044 2210,1055']
]);

// Trend lines and trades
out.push(line(2142, 1018, 2503, 1048, '#dc143c', 2), line(2167, 1022, 2503, 1247, '#dc143c', 2));
out.push(line(2166, 1020.5, 2222, 1020.5, '#dc143c', 1, '4 3'), line(2190, 1039.5, 2210, 1039.5, '#dc143c', 1, '4 3'));
out.push(line(1985, 968, 2210, 1085, '#ff4500', 1, '2 4'));
const trade = (x, y, c, d) => `<circle cx="${x}" cy="${y}" r="7" fill="#000" stroke="#fff" stroke-width="1.5"/><path d="M${x} ${y - 5 * d}l5 ${5 * d}h-2.500v${4 * d}h-5v${-4 * d}h-2.500z" fill="${c}" stroke="#fff" stroke-width=".8"/>`;
out.push(trade(1982, 966, '#f0411c', -1), trade(2210, 1089, '#1c72c8', 1));

// Headline
out.push('<text class="big" x="211" y="148">USTEC M6</text>');
out.push('<text class="sub" x="512" y="165" text-anchor="end">Carlsberg Don\'t Do Charts</text>');
out.push('<text class="pip" x="543" y="156">0.00000</text>');
plot.innerHTML = out.join('');

// Scales
const ax = [];
for (let i = 0; i <= 40; i++) {
  const y = 86 + 32 * i;
  ax.push(line(2503, y + 0.5, 2507, y + 0.5, '#fff'), `<text class="axis" x="2508" y="${y + 4}">${(21890.05 - 23.45 * i).toFixed(2)}</text>`);
}
ax.push('<rect x="2505" y="1067" width="44" height="12" fill="#fff" stroke="#ffa500" stroke-width=".5"/><text class="axis" x="2508" y="1077" style="fill:#000">21166.80</text>');
const times = ['28 May 2025'];
'01:36 03:12 04:48 06:24 08:00 09:36 11:12 12:48 14:24 16:00 17:36 19:12 20:48 22:24'.split(' ').forEach(t => times.push('29 May ' + t));
'01:00 02:36 04:12 05:48 07:24 09:00 10:36 12:12 13:48 15:24 17:00 18:36 20:12 21:48 23:24'.split(' ').forEach(t => times.push('30 May ' + t));
'02:00 03:36 05:12 06:48 08:24'.split(' ').forEach(t => times.push('2 Jun ' + t));
times.forEach((t, i) => ax.push(line(2.5 + 64 * i, 1399, 2.5 + 64 * i, 1403, '#fff'), `<text class="axis" x="${1 + 64 * i}" y="1411">${t}</text>`));
axes.innerHTML = ax.join('');
```
